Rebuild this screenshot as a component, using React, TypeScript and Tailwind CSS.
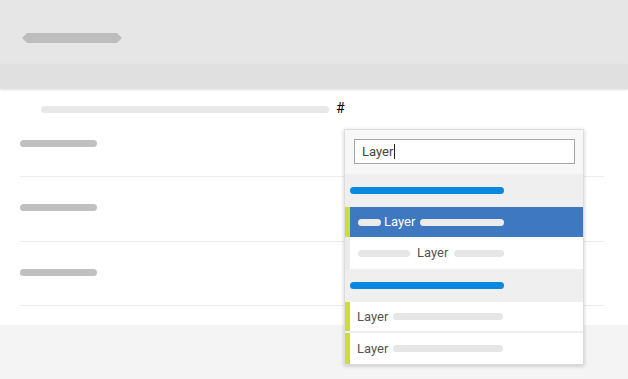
import React from 'react';

const Pill = ({ w, color = 'bg-[#e6e6e6]' }: { w: string; color?: string }) => (
  <span className={`inline-block h-[7px] rounded-full ${w} ${color}`} />
);

export default function App() {
  return (
    <div className="relative flex h-[379px] w-full flex-col overflow-hidden bg-[#f4f4f4] font-['Roboto',sans-serif]">
      {/* header */}
      <div className="flex h-[64px] items-start bg-[#e6e6e6] px-[22px] pt-[33px]">
        <span className="block h-[10px] w-[100px] bg-[#bdbdbd] [clip-path:polygon(5px_0,95px_0,100px_50%,95px_100%,5px_100%,0_50%)]" />
      </div>
      <div className="relative z-10 h-[25px] bg-[#e0e0e0] shadow-[0_1px_2px_rgba(0,0,0,0.12)]" />

      {/* content */}
      <div className="bg-white pb-[19px]">
        <div className="flex h-[24px] items-start pl-[41px]">
          <span className="mt-[17px] block h-[7px] w-[288px] rounded-full bg-[#e8e8e8]" />
          <span className="ml-[7px] mt-[12px] text-[14px] leading-[14px] text-black">#</span>
        </div>
        {['h-[64px]', 'h-[65px]', 'h-[64px]'].map((h, i) => (
          <div key={i} className={`ml-[20px] mr-[24px] ${h} border-b border-[#ebebeb] pt-[27px]`}>
            <span className="block h-[7px] w-[77px] rounded-full bg-[#c0c0c0]" />
          </div>
        ))}
      </div>

      {/* dropdown */}
      <div className="absolute left-[344px] top-[129px] w-[240px] border border-[#dcdcdc] bg-white shadow-[0_1px_4px_rgba(0,0,0,0.2)]">
        <div className="h-[44px] bg-[#f7f7f7] px-[9px] pt-[9px]">
          <div className="flex h-[25px] w-[221px] items-center border border-[#a6a6a6] bg-white px-[7px] text-[13px] text-[#444]">
            Layer<span className="ml-[1px] inline-block h-[15px] w-px bg-[#222]" />
          </div>
        </div>

        <div className="flex h-[33px] items-center bg-[#efefef] pl-[5px]">
          <Pill w="w-[154px]" color="bg-[#0a88e0]" />
        </div>

        <div className="flex h-[30px] items-center border-l-[5px] border-[#cddc39] bg-[#3e78c0] pl-[8px] text-[13px] text-white">
          <Pill w="w-[23px]" color="bg-[#ececec]" />
          <span className="ml-[3px]">Layer</span>
          <span className="ml-[5px] flex"><Pill w="w-[84px]" color="bg-[#ececec]" /></span>
        </div>

        <div className="flex h-[32px] items-center border-l-[5px] border-[#ebebeb] bg-white pl-[8px] text-[13px] text-[#555]">
          <Pill w="w-[52px]" />
          <span className="ml-[7px]">Layer</span>
          <span className="ml-[6px] flex"><Pill w="w-[50px]" /></span>
        </div>

        <div className="flex h-[33px] items-center bg-[#efefef] pl-[5px]">
          <Pill w="w-[154px]" color="bg-[#0a88e0]" />
        </div>

        <div className="flex h-[29px] items-center border-l-[5px] border-[#cddc39] bg-white pl-[7px] text-[13px] text-[#555]">
          <span>Layer</span>
          <span className="ml-[5px] flex"><Pill w="w-[110px]" /></span>
        </div>
        <div className="h-[2px] bg-[#eeeeee]" />
        <div className="flex h-[31px] items-center border-l-[5px] border-[#cddc39] bg-white pl-[7px] text-[13px] text-[#555]">
          <span>Layer</span>
          <span className="ml-[5px] flex"><Pill w="w-[110px]" /></span>
        </div>
      </div>
    </div>
  );
}
